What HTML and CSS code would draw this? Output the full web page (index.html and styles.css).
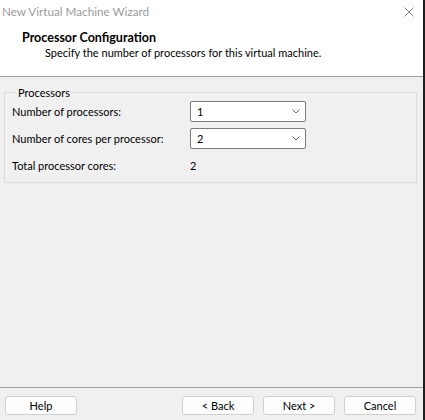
FILE: index.html
```html
<!DOCTYPE html>
<html>
<head>
<meta charset="utf-8">
<link rel="stylesheet" href="styles.css">
</head>
<body>
<div class="window">
  <div class="titlebar">
    <span class="title">New Virtual Machine Wizard</span>
    <svg class="close" width="10" height="10" viewBox="0 0 10 10"><path d="M0.5 0.5L9.5 9.5M9.5 0.5L0.5 9.5" stroke="#8a8a8a" stroke-width="1" fill="none"/></svg>
  </div>
  <div class="header">
    <div class="h-title">Processor Configuration</div>
    <div class="h-sub">Specify the number of processors for this virtual machine.</div>
  </div>
  <div class="content">
    <fieldset class="group">
      <legend>Processors</legend>
      <div class="row">
        <span class="label">Number of processors:</span>
        <div class="combo"><span>1</span><svg class="chev" width="8" height="5" viewBox="0 0 8 5"><path d="M0.5 0.5L4 4L7.5 0.5" stroke="#6a6a6a" fill="none" stroke-width="1"/></svg></div>
      </div>
      <div class="row">
        <span class="label">Number of cores per processor:</span>
        <div class="combo"><span>2</span><svg class="chev" width="8" height="5" viewBox="0 0 8 5"><path d="M0.5 0.5L4 4L7.5 0.5" stroke="#6a6a6a" fill="none" stroke-width="1"/></svg></div>
      </div>
      <div class="row">
        <span class="label">Total processor cores:</span>
        <span class="value">2</span>
      </div>
    </fieldset>
  </div>
  <div class="footer">
    <button class="btn">Help</button>
    <div class="spacer"></div>
    <button class="btn">&lt; Back</button>
    <button class="btn">Next &gt;</button>
    <button class="btn">Cancel</button>
  </div>
</div>
</body>
</html>
```
FILE: styles.css
```css
html, body {
  margin: 0;
  padding: 0;
}
body {
  width: 425px;
  height: 420px;
  overflow: hidden;
  font-family: "Segoe UI", Lato, "Noto Sans", sans-serif;
  font-size: 11px;
  color: #000;
}
.window {
  box-sizing: border-box;
  width: 425px;
  height: 420px;
  display: flex;
  flex-direction: column;
  background: #f0f0f0;
  border-right: 2px solid #1e1e1e;
}
.titlebar {
  height: 23px;
  background: #fff;
  display: flex;
  align-items: center;
  justify-content: space-between;
  padding: 0 9px 0 2px;
}
.title {
  color: #9a9a9a;
  font-size: 11.7px;
  line-height: 15px;
}
.close {
  display: block;
  margin-top: 1px;
}
.header {
  background: #fff;
  padding: 7px 0 16px 22px;
  border-bottom: 1px solid #a0a0a0;
  line-height: 15px;
}
.h-title {
  font-weight: bold;
  font-size: 12.5px;
}
.h-sub {
  padding-left: 23px;
}
.content {
  flex: 1;
  padding: 8px 6px 0 4px;
}
.group {
  margin: 0;
  padding: 1px 7px 6px 7px;
  border: 1px solid #dcdcdc;
  display: flex;
  flex-direction: column;
  gap: 6px;
}
.group legend {
  padding: 0 2px;
  margin-left: 4px;
  line-height: 15px;
}
.row {
  height: 21px;
  display: flex;
  align-items: center;
}
.label {
  width: 178px;
  line-height: 15px;
}
.value {
  line-height: 15px;
}
.combo {
  box-sizing: border-box;
  width: 116px;
  height: 21px;
  background: #fff;
  border: 1px solid #7a7a7a;
  border-radius: 2px;
  display: flex;
  align-items: center;
  justify-content: space-between;
  padding: 0 5px 0 6px;
}
.chev {
  display: block;
}
.footer {
  box-sizing: border-box;
  height: 33px;
  border-top: 1px solid #a0a0a0;
  display: flex;
  align-items: flex-start;
  padding: 8px 7px 0 5px;
  gap: 9px;
}
.spacer {
  flex: 1;
}
.btn {
  box-sizing: border-box;
  width: 72px;
  height: 19px;
  margin: 0;
  padding: 0;
  background: #fdfdfd;
  border: 1px solid #d0d0d0;
  border-radius: 3px;
  font-family: inherit;
  font-size: 11px;
  color: #000;
  line-height: 15px;
}
```
